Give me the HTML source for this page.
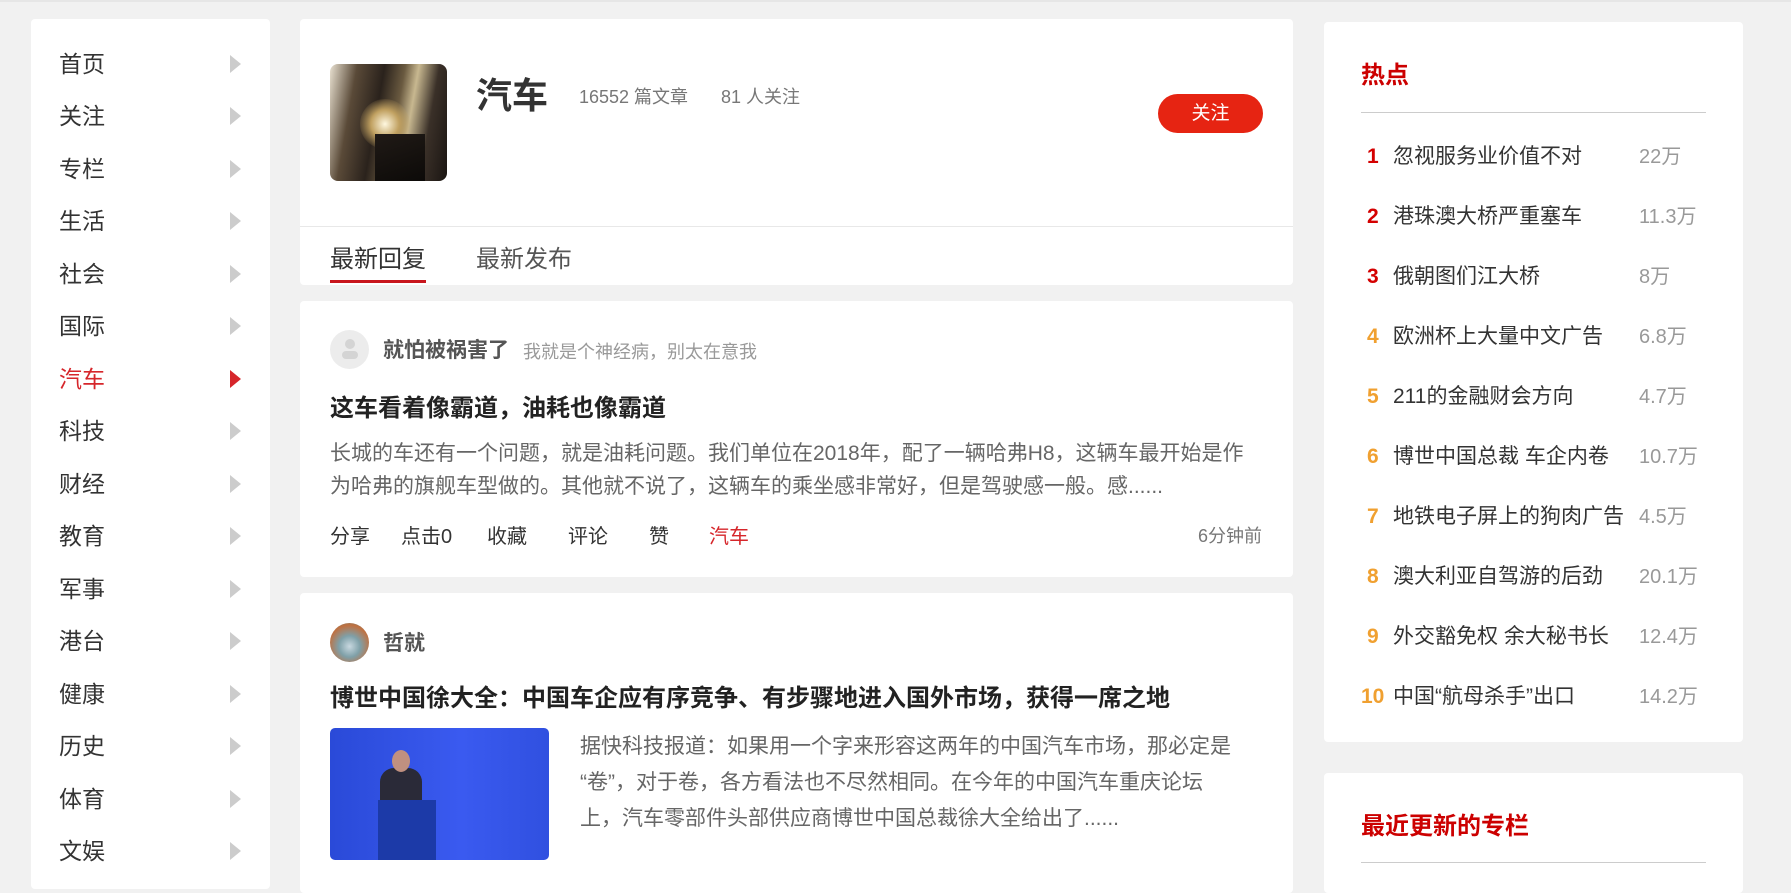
<!DOCTYPE html>
<html><head><meta charset="utf-8">
<style>
*{margin:0;padding:0;box-sizing:border-box}
body{width:1791px;height:875px;overflow:hidden;background:#f1f1f1;font-family:"Liberation Sans","Noto Sans CJK SC",sans-serif;color:#333;position:relative;border-top:2px solid #e6e6e6}
.abs{position:absolute}
.card{position:absolute;background:#fff;border-radius:4px}
.nav{left:31px;top:17px;width:239px;height:870px}
.nav div{position:absolute;left:28px;font-size:23px;line-height:30px;color:#333}
.nav i{position:absolute;left:199px;width:0;height:0;border-top:9px solid transparent;border-bottom:9px solid transparent;border-left:11px solid #ccc}
.nav .on{color:#d6262b}
.nav i.on{border-left-color:#d6262b}
.t{white-space:nowrap;position:absolute}
.hot .n{position:absolute;left:43px;font-size:21px;font-weight:bold;line-height:30px}
.hot .x{position:absolute;left:69px;font-size:21px;color:#333;white-space:nowrap;line-height:30px}
.hot .c{position:absolute;left:315px;font-size:20px;color:#999;line-height:30px}
</style></head><body>

<div class="card nav">
<div style="top:30px">首页</div><i style="top:36px"></i>
<div style="top:82px">关注</div><i style="top:88px"></i>
<div style="top:135px">专栏</div><i style="top:141px"></i>
<div style="top:187px">生活</div><i style="top:193px"></i>
<div style="top:240px">社会</div><i style="top:246px"></i>
<div style="top:292px">国际</div><i style="top:298px"></i>
<div class="on" style="top:345px">汽车</div><i class="on" style="top:351px"></i>
<div style="top:397px">科技</div><i style="top:403px"></i>
<div style="top:450px">财经</div><i style="top:456px"></i>
<div style="top:502px">教育</div><i style="top:508px"></i>
<div style="top:555px">军事</div><i style="top:561px"></i>
<div style="top:607px">港台</div><i style="top:613px"></i>
<div style="top:660px">健康</div><i style="top:666px"></i>
<div style="top:712px">历史</div><i style="top:718px"></i>
<div style="top:765px">体育</div><i style="top:771px"></i>
<div style="top:817px">文娱</div><i style="top:823px"></i>
</div>

<!-- header card -->
<div class="card" style="left:300px;top:17px;width:993px;height:266px">
<div class="abs" style="left:30px;top:45px;width:117px;height:117px;border-radius:8px;overflow:hidden;background:linear-gradient(100deg,#e8e0d0 0%,#5a4a38 20%,#2a221c 40%,#6a5a40 55%,#c8b890 65%,#3a3028 80%,#1a1512 100%)">
<div class="abs" style="left:30px;top:35px;width:50px;height:50px;border-radius:50%;background:radial-gradient(circle,#fff8e0 0%,#c0a060 40%,rgba(0,0,0,0) 75%)"></div>
<div class="abs" style="left:45px;top:70px;width:50px;height:47px;background:linear-gradient(160deg,#201a16,#0c0a08)"></div>
</div>
<div class="t" style="left:176px;top:48px;font-size:36px;font-weight:bold;color:#333">汽车</div>
<div class="t" style="left:279px;top:64px;font-size:18px;color:#777">16552 篇文章</div>
<div class="t" style="left:421px;top:64px;font-size:18px;color:#777">81 人关注</div>
<div class="abs" style="left:858px;top:75px;width:105px;height:39px;border-radius:20px;background:#e62412;color:#fff;font-size:19px;text-align:center;line-height:39px">关注</div>
<div class="abs" style="left:0;top:207px;width:993px;height:1px;background:#e8e8e8"></div>
<div class="t" style="left:30px;top:220px;font-size:24px;color:#333">最新回复</div>
<div class="t" style="left:176px;top:220px;font-size:24px;color:#555">最新发布</div>
<div class="abs" style="left:30px;top:261px;width:96px;height:3px;background:#c8161d"></div>
</div>

<!-- card 2 -->
<div class="card" style="left:300px;top:299px;width:993px;height:276px">
<div class="abs" style="left:30px;top:29px;width:39px;height:39px;border-radius:50%;background:#ececec"></div>
<div class="abs" style="left:45px;top:38px;width:10px;height:10px;border-radius:50%;background:#d4d4d4"></div>
<div class="abs" style="left:42px;top:50px;width:16px;height:8px;border-radius:5px;background:#d4d4d4"></div>
<div class="t" style="left:83px;top:33px;font-size:21px;font-weight:bold;color:#555">就怕被祸害了</div>
<div class="t" style="left:223px;top:37px;font-size:18px;color:#999">我就是个神经病，别太在意我</div>
<div class="t" style="left:30px;top:87px;font-size:24px;font-weight:bold;color:#222">这车看着像霸道，油耗也像霸道</div>
<div class="abs" style="left:30px;top:136px;width:920px;font-size:21px;line-height:33px;color:#666">长城的车还有一个问题，就是油耗问题。我们单位在2018年，配了一辆哈弗H8，这辆车最开始是作为哈弗的旗舰车型做的。其他就不说了，这辆车的乘坐感非常好，但是驾驶感一般。感......</div>
<div class="t" style="left:30px;top:219px;font-size:20px;color:#333">分享</div>
<div class="t" style="left:101px;top:219px;font-size:20px;color:#333">点击0</div>
<div class="t" style="left:187px;top:219px;font-size:20px;color:#333">收藏</div>
<div class="t" style="left:268px;top:219px;font-size:20px;color:#333">评论</div>
<div class="t" style="left:349px;top:219px;font-size:20px;color:#333">赞</div>
<div class="t" style="left:409px;top:219px;font-size:20px;color:#d6262b">汽车</div>
<div class="t" style="left:898px;top:221px;font-size:18px;color:#777">6分钟前</div>
</div>

<!-- card 3 -->
<div class="card" style="left:300px;top:591px;width:993px;height:300px">
<div class="abs" style="left:30px;top:30px;width:39px;height:39px;border-radius:50%;background:radial-gradient(circle at 50% 60%,#c8d8e0 0%,#7fa0a8 35%,#c07040 70%,#4a8a90 100%)"></div>
<div class="t" style="left:83px;top:34px;font-size:21px;font-weight:bold;color:#555">哲就</div>
<div class="t" style="left:30px;top:85px;font-size:24px;font-weight:bold;color:#222">博世中国徐大全：中国车企应有序竞争、有步骤地进入国外市场，获得一席之地</div>
<div class="abs" style="left:30px;top:135px;width:219px;height:132px;border-radius:5px;background:linear-gradient(90deg,#2a4ad8,#3a5af0 60%,#3050e0);overflow:hidden">
<div class="abs" style="left:50px;top:40px;width:42px;height:50px;background:#2a2a38;border-radius:14px 14px 0 0"></div>
<div class="abs" style="left:62px;top:22px;width:18px;height:22px;background:#c09080;border-radius:50%"></div>
<div class="abs" style="left:48px;top:72px;width:58px;height:60px;background:#1c3aa8"></div>
</div>
<div class="abs" style="left:280px;top:136px;white-space:nowrap;font-size:21px;line-height:36px;color:#666">据快科技报道：如果用一个字来形容这两年的中国汽车市场，那必定是<br>“卷”，对于卷，各方看法也不尽然相同。在今年的中国汽车重庆论坛<br>上，汽车零部件头部供应商博世中国总裁徐大全给出了......</div>
</div>

<!-- hot -->
<div class="card hot" style="left:1324px;top:20px;width:419px;height:720px">
<div class="t" style="left:37px;top:33px;font-size:24px;font-weight:bold;color:#c00">热点</div>
<div class="abs" style="left:37px;top:90px;width:345px;height:1px;background:#ccc"></div>
<div class="abs" style="left:0;top:120px;width:419px">
<span class="n" style="top:0;color:#d40000">1</span><span class="x" style="top:0">忽视服务业价值不对</span><span class="c" style="top:0">22万</span>
<span class="n" style="top:60px;color:#d40000">2</span><span class="x" style="top:60px">港珠澳大桥严重塞车</span><span class="c" style="top:60px">11.3万</span>
<span class="n" style="top:120px;color:#d40000">3</span><span class="x" style="top:120px">俄朝图们江大桥</span><span class="c" style="top:120px">8万</span>
<span class="n" style="top:180px;color:#f0a030">4</span><span class="x" style="top:180px">欧洲杯上大量中文广告</span><span class="c" style="top:180px">6.8万</span>
<span class="n" style="top:240px;color:#f0a030">5</span><span class="x" style="top:240px">211的金融财会方向</span><span class="c" style="top:240px">4.7万</span>
<span class="n" style="top:300px;color:#f0a030">6</span><span class="x" style="top:300px">博世中国总裁 车企内卷</span><span class="c" style="top:300px">10.7万</span>
<span class="n" style="top:360px;color:#f0a030">7</span><span class="x" style="top:360px">地铁电子屏上的狗肉广告</span><span class="c" style="top:360px">4.5万</span>
<span class="n" style="top:420px;color:#f0a030">8</span><span class="x" style="top:420px">澳大利亚自驾游的后劲</span><span class="c" style="top:420px">20.1万</span>
<span class="n" style="top:480px;color:#f0a030">9</span><span class="x" style="top:480px">外交豁免权 余大秘书长</span><span class="c" style="top:480px">12.4万</span>
<span class="n" style="top:540px;left:37px;color:#f0a030">10</span><span class="x" style="top:540px">中国“航母杀手”出口</span><span class="c" style="top:540px">14.2万</span>
</div>
</div>

<div class="card" style="left:1324px;top:771px;width:419px;height:120px">
<div class="t" style="left:37px;top:33px;font-size:24px;font-weight:bold;color:#c00">最近更新的专栏</div>
<div class="abs" style="left:37px;top:89px;width:345px;height:1px;background:#ccc"></div>
</div>

</body></html>
